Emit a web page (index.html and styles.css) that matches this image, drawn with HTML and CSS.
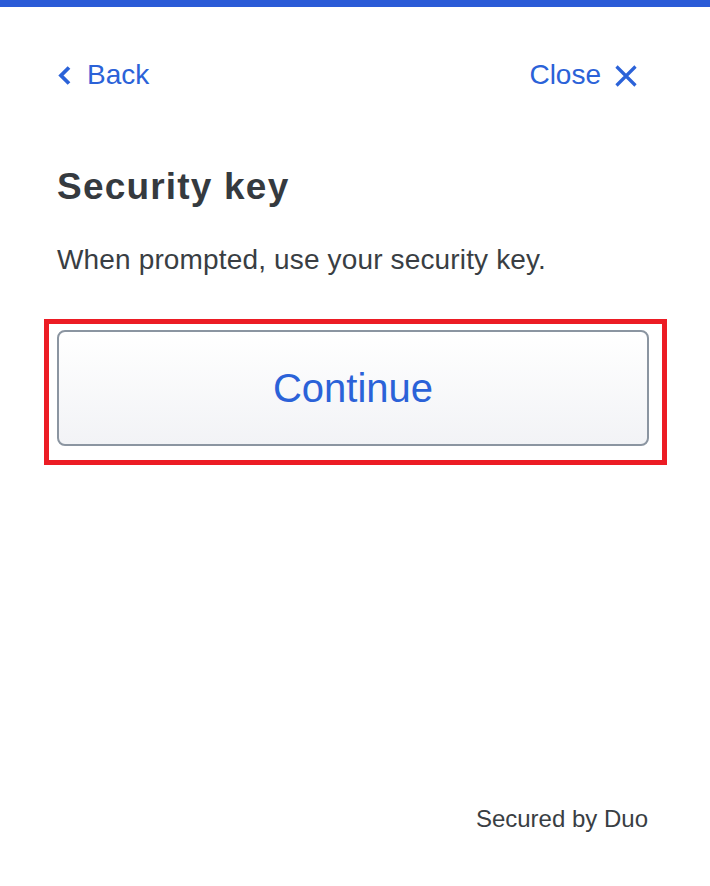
FILE: index.html
```html
<!DOCTYPE html>
<html lang="en">
<head>
<meta charset="utf-8">
<title>Security key</title>
<link rel="stylesheet" href="styles.css">
</head>
<body>
<div class="page">
  <div class="topbar"></div>
  <div class="content">
    <div class="nav">
      <a class="nav-link back" href="#">
        <svg class="chev" width="13" height="19" viewBox="0 0 13 19" aria-hidden="true"><polyline points="11,1.5 3,9.5 11,17.5" fill="none" stroke="currentColor" stroke-width="3.8" stroke-linejoin="miter"/></svg>
        <span>Back</span>
      </a>
      <a class="nav-link close" href="#">
        <span>Close</span>
        <svg class="xicon" width="24" height="24" viewBox="0 0 24 24" aria-hidden="true"><path d="M2.5 2.5 L21.5 21.5 M21.5 2.5 L2.5 21.5" fill="none" stroke="currentColor" stroke-width="3.2"/></svg>
      </a>
    </div>
    <h1 class="title">Security key</h1>
    <p class="desc">When prompted, use your security key.</p>
    <div class="highlight">
      <button class="btn" type="button">Continue</button>
    </div>
  </div>
  <div class="footer">Secured by Duo</div>
</div>
</body>
</html>
```

FILE: styles.css
```css
html, body {
  margin: 0;
  padding: 0;
  background: #ffffff;
}
body {
  font-family: "Liberation Sans", Arial, Helvetica, sans-serif;
  color: #363b40;
}
.page {
  height: 886px;
  display: flex;
  flex-direction: column;
}
.topbar {
  height: 7px;
  background: #2a5bd7;
  flex: none;
}
.content {
  padding: 0 61px 0 57px;
}
.nav {
  margin-top: 48px;
  height: 40px;
  display: flex;
  justify-content: space-between;
  align-items: center;
}
.nav-link {
  display: flex;
  align-items: center;
  color: #2b62d8;
  text-decoration: none;
  font-size: 28px;
  line-height: 40px;
}
.back .chev {
  margin-left: 1px;
  margin-right: 16px;
  margin-top: 1px;
}
.close {
  margin-right: 11px;
}
.close .xicon {
  margin-left: 13px;
  margin-top: 2px;
}
.title {
  margin: 70px 0 0 0;
  font-size: 37px;
  line-height: 44px;
  font-weight: 700;
  color: #353a3f;
  letter-spacing: 1.2px;
}
.desc {
  margin: 33px 0 0 0;
  font-size: 28px;
  line-height: 36px;
  color: #393e43;
  letter-spacing: 0.15px;
}
.highlight {
  margin: 41px -18px 0 -13px;
  border: 5px solid #ec1c24;
  padding: 6px 13px 14px 8px;
}
.btn {
  display: flex;
  width: 100%;
  height: 116px;
  align-items: center;
  justify-content: center;
  border: 2px solid #8b95a1;
  border-radius: 8px;
  background: linear-gradient(#ffffff, #f2f3f6);
  color: #2b62d8;
  font-family: "Liberation Sans", Arial, Helvetica, sans-serif;
  font-size: 40px;
  line-height: 44px;
  padding: 0;
  cursor: pointer;
}
.footer {
  margin-top: auto;
  padding: 0 62px 53px 0;
  text-align: right;
  font-size: 24px;
  line-height: 28px;
  color: #393e43;
}
```
